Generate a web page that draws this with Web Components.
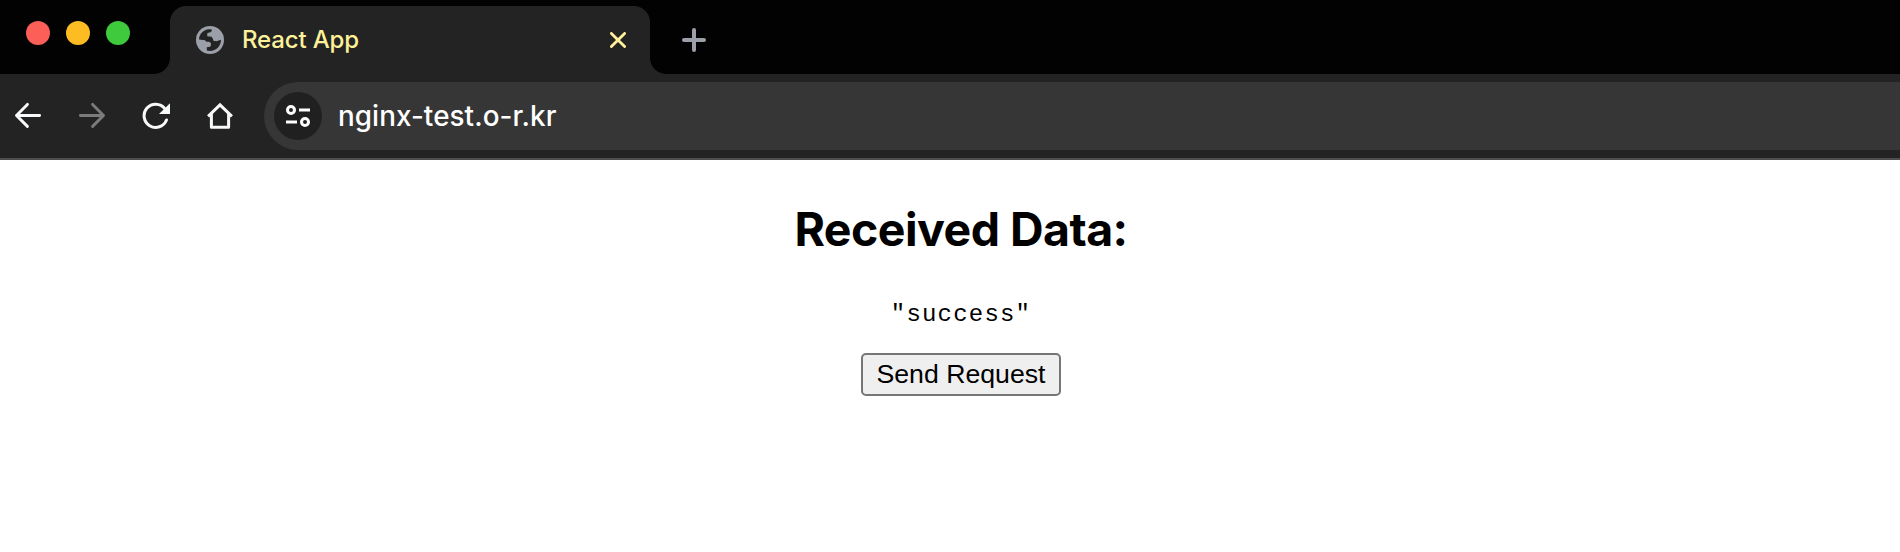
<!DOCTYPE html>
<html lang="en">
<head>
<meta charset="utf-8">
<title>React App</title>
<style>
html,body{margin:0;height:100%;background:#fff;overflow:hidden}
</style>
</head>
<body>
<browser-window>
  <tab-strip slot="tabs"><browser-tab>React App</browser-tab></tab-strip>
  <nav-bar slot="nav"><address-bar>nginx-test.o-r.kr</address-bar></nav-bar>
  <data-view>
    <span slot="title">Received Data:</span>
    <span slot="data">"success"</span>
    <request-button slot="action">Send Request</request-button>
  </data-view>
</browser-window>
<script>
const define = (name, html) => customElements.define(name, class extends HTMLElement {
  constructor() {
    super();
    this.attachShadow({mode: 'open'}).innerHTML = html;
  }
});

define('browser-window', `<style>
:host{display:flex;flex-direction:column;width:100%;height:552px;overflow:hidden;font-family:Inter,sans-serif}
</style><slot name="tabs"></slot><slot name="nav"></slot><slot></slot>`);

define('tab-strip', `<style>
:host{display:flex;height:74px;background:#020202;box-sizing:border-box}
.lights{display:flex;gap:16px;padding:21px 40px 0 26px;flex:none}
i{width:24px;height:24px;border-radius:50%}
.r{background:#fb5f57}.y{background:#fdbc21}.g{background:#3fc93c}
svg{margin:28px 0 0 32px;flex:none}
</style><div class="lights"><i class="r"></i><i class="y"></i><i class="g"></i></div>
<slot></slot>
<svg width="24" height="24" viewBox="0 0 24 24" fill="none" stroke="#9b9fa8" stroke-width="4" stroke-linecap="round"><path d="M2 12h20M12 2v20"/></svg>`);

define('browser-tab', `<style>
:host{position:relative;display:flex;align-items:center;box-sizing:border-box;width:480px;height:68px;margin-top:6px;padding:0 24px 0 26px;background:#232323;border-radius:16px 16px 0 0;color:#fdf19a;font-size:24px;font-weight:450}
:host::before,:host::after{content:"";position:absolute;bottom:0;width:16px;height:16px}
:host::before{left:-16px;background:radial-gradient(circle at 0 0,transparent 15.5px,#232323 16.2px)}
:host::after{right:-16px;background:radial-gradient(circle at 100% 0,transparent 15.5px,#232323 16.2px)}
.t{flex:1;margin-left:18px;line-height:30px;letter-spacing:-.15px}
svg{flex:none;display:block}
</style><svg width="28" height="28" viewBox="0 0 28 28"><circle cx="14" cy="14" r="14" fill="#9b9fa8"/><path fill="#232323" d="M3 13.5C3 8.2 7.5 3.6 13 3.2L15.6 3.4 16 4.6 14.6 6.2 11.4 7 11.2 10.2 15.6 10.8 17 13 17.4 14.8 20.4 15.3 25 13.8C25 20 20.3 24.9 14 24.9L10.8 24.4V21.2L14 20.7 14.9 19.4V17L13 15.7H10.4L9 14.2z"/></svg>
<span class="t"><slot></slot></span>
<svg width="16" height="16" viewBox="0 0 16 16" fill="none" stroke="#fdf19a" stroke-width="2.8" stroke-linecap="round"><path d="M1.4 1.4l13.2 13.2M14.6 1.4L1.4 14.6"/></svg>`);

define('nav-bar', `<style>
:host{display:flex;align-items:center;height:86px;box-sizing:border-box;background:#232323;border-bottom:2px solid #4f4d4f;flex:none}
svg{flex:none;display:block}
.icons{display:flex;gap:36px;padding:0 30px 0 14px}
slot{display:contents}
::slotted(address-bar){flex:1}
</style><div class="icons">
<svg width="28" height="28" viewBox="0 0 28 28" fill="none" stroke="#f8f9fa" stroke-width="2.9" stroke-linecap="round" stroke-linejoin="round"><path d="M25.6 13.5H2.5M13.4 2.4L2.5 13.5l10.9 10.9"/></svg>
<svg width="28" height="28" viewBox="0 0 28 28" fill="none" stroke="#7b7b7b" stroke-width="2.9" stroke-linecap="round" stroke-linejoin="round"><path d="M2.4 13.5h23.1M14.6 2.4l10.9 11.1-10.9 10.9"/></svg>
<svg width="28" height="28" viewBox="0 0 28 28"><path d="M24.5 18A11.6 11.6 0 1 1 22.8 6.6" fill="none" stroke="#f8f9fa" stroke-width="3" stroke-linecap="round"/><path d="M28 1.2V12H17z" fill="#f8f9fa"/></svg>
<svg width="28" height="28" viewBox="0 0 28 28" fill="none" stroke="#f8f9fa" stroke-width="3"><path d="M2.1 14.3L14 2.9l11.9 11.4"/><path d="M5.4 12v13.3h17.2V12" stroke-linejoin="round"/></svg>
</div><slot></slot>`);

define('address-bar', `<style>
:host{display:flex;align-items:center;height:68px;box-sizing:border-box;padding-left:10px;background:#363636;border-radius:34px 0 0 34px;color:#fff;font-size:27.8px;font-weight:450}
.site{display:flex;align-items:center;justify-content:center;width:48px;height:48px;border-radius:50%;background:#202020}
.u{margin-left:16px;line-height:36px;white-space:nowrap;letter-spacing:.08px}
</style><span class="site"><svg width="24" height="24" viewBox="0 0 24 24" fill="none" stroke="#fff" stroke-width="3"><circle cx="5" cy="6" r="3.5"/><circle cx="19" cy="18" r="3.5"/><path d="M13 6h11M0 18h11"/></svg></span><span class="u"><slot></slot></span>`);

define('data-view', `<style>
:host{display:flex;flex-direction:column;align-items:center;width:1922px;color:#000}
h2{margin:40px 0 0;font-size:46.5px;line-height:58px;font-weight:700;letter-spacing:-.54px}
pre{margin:42px 0 0;font:24px/30px "Liberation Mono",monospace;letter-spacing:1.2px}
.a{margin-top:23px}
</style><h2><slot name="title"></slot></h2><pre><slot name="data"></slot></pre><div class="a"><slot name="action"></slot></div>`);

define('request-button', `<style>
:host{display:block}
button{display:block;box-sizing:border-box;width:200px;height:43px;margin:0;padding:0 0 2px;border:2px solid #767676;border-radius:5px;background:#efefef;color:#000;font:26.67px/36px "Liberation Sans",Arial,sans-serif;white-space:nowrap}
</style><button><slot></slot></button>`);
</script>
</body>
</html>
